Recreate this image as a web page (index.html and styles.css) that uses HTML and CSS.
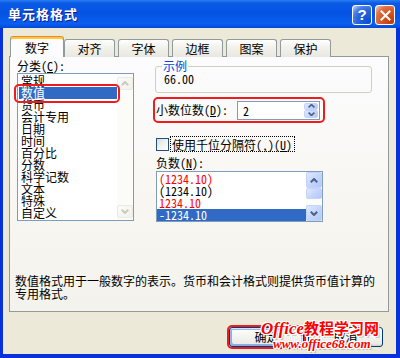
FILE: index.html
```html
<!DOCTYPE html>
<html>

<head>
    <meta charset="utf-8">
    <link rel="stylesheet" href="styles.css">
</head>

<body>
    <div class="window">
        <div class="titlebar">
            <span class="title">单元格格式</span>
            <div class="title_btns">
                <span class="title_btn help_btn">?</span>
                <span class="title_btn close_btn">
                    <svg width="11" height="11" viewBox="0 0 11 11">
                        <path d="M1.5 1.5 L9.5 9.5 M9.5 1.5 L1.5 9.5" stroke="#fff" stroke-width="2" stroke-linecap="square" />
                    </svg>
                </span>
            </div>
        </div>

        <div class="client">
            <div class="tabs">
                <span class="tab tab_active">数字</span>
                <span class="tab">对齐</span>
                <span class="tab">字体</span>
                <span class="tab">边框</span>
                <span class="tab">图案</span>
                <span class="tab">保护</span>
            </div>

            <div class="panel">
                <div class="panel_cols">
                    <div class="col_left">
                        <div class="label">分类(<u>C</u>):</div>
                        <div class="listbox cat_list">
                            <ul class="items">
                                <li>常规</li>
                                <li class="selected">数值</li>
                                <li>货币</li>
                                <li>会计专用</li>
                                <li>日期</li>
                                <li>时间</li>
                                <li>百分比</li>
                                <li>分数</li>
                                <li>科学记数</li>
                                <li>文本</li>
                                <li>特殊</li>
                                <li>自定义</li>
                            </ul>
                            <div class="scroll scroll_off">
                                <span class="sbtn">
                                    <svg width="8" height="5" viewBox="0 0 8 5"><path d="M0.8 4.2 L4 1 L7.2 4.2" /></svg>
                                </span>
                                <span class="strack"></span>
                                <span class="sbtn">
                                    <svg width="8" height="5" viewBox="0 0 8 5"><path d="M0.8 0.8 L4 4 L7.2 0.8" /></svg>
                                </span>
                            </div>
                        </div>
                        <span class="mark cat_mark"></span>
                    </div>

                    <div class="col_right">
                        <fieldset class="sample">
                            <legend>示例</legend>
                            <div class="sample_val">66.00</div>
                        </fieldset>

                        <div class="mark decimal_row">
                            <span>小数位数(<u>D</u>):</span>
                            <div class="spin">
                                <span class="spin_val">2</span>
                                <span class="spin_btns">
                                    <span class="spin_btn">
                                        <svg width="7" height="4" viewBox="0 0 7 4"><path d="M0.6 3.4 L3.5 0.6 L6.4 3.4" /></svg>
                                    </span>
                                    <span class="spin_btn">
                                        <svg width="7" height="4" viewBox="0 0 7 4"><path d="M0.6 0.6 L3.5 3.4 L6.4 0.6" /></svg>
                                    </span>
                                </span>
                            </div>
                        </div>

                        <div class="check_row">
                            <span class="checkbox"></span>
                            <span class="check_label">使用千位分隔符(,)(<u>U</u>)</span>
                        </div>

                        <div class="label neg_label">负数(<u>N</u>):</div>
                        <div class="listbox neg_list">
                            <ul class="items">
                                <li class="red">(1234.10)</li>
                                <li>(1234.10)</li>
                                <li class="red">1234.10</li>
                                <li class="selected">-1234.10</li>
                            </ul>
                            <div class="scroll">
                                <span class="sbtn">
                                    <svg width="8" height="5" viewBox="0 0 8 5"><path d="M0.8 4.2 L4 1 L7.2 4.2" /></svg>
                                </span>
                                <span class="sthumb"></span>
                                <span class="strack"></span>
                                <span class="sbtn">
                                    <svg width="8" height="5" viewBox="0 0 8 5"><path d="M0.8 0.8 L4 4 L7.2 0.8" /></svg>
                                </span>
                            </div>
                        </div>
                    </div>
                </div>

                <p class="desc">数值格式用于一般数字的表示。货币和会计格式则提供货币值计算的<br>专用格式。</p>
            </div>

            <div class="buttons">
                <span class="mark ok_mark"><span class="btn btn_default">确定</span></span>
                <span class="btn">取消</span>
            </div>
        </div>

        <div class="watermark">
            <div class="wm_top"><i>Office</i>教程学习网</div>
            <div class="wm_url">www.office68.com</div>
        </div>
    </div>
</body>

</html>
```

FILE: styles.css
```css
* {
    box-sizing: border-box;
}

html,
body {
    margin: 0;
    padding: 0;
}

body {
    width: 400px;
    height: 358px;
    overflow: hidden;
    font-family: "Noto Sans Mono CJK SC", "Noto Sans CJK SC", sans-serif;
    font-size: 12px;
    line-height: 12px;
    color: #000;
    background: #0831d9;
}

u {
    text-underline-offset: 1px;
}

.window {
    position: relative;
    width: 400px;
    height: 358px;
    display: flex;
    flex-direction: column;
    background: #0831d9;
}

/* title bar */

.titlebar {
    flex: none;
    height: 28px;
    display: flex;
    align-items: center;
    justify-content: space-between;
    padding: 0 5px 0 8px;
    background: linear-gradient(180deg, #2a7cf4 0, #0a5ae6 12%, #0553e3 45%, #0a5ff0 85%, #0648d6 100%);
}

.title {
    color: #fff;
    font-size: 13px;
    font-weight: bold;
    letter-spacing: 1px;
    text-shadow: 1px 1px #0f1a89;
}

.title_btns {
    display: flex;
    gap: 3px;
    padding-top: 2px;
}

.title_btn {
    width: 20px;
    height: 20px;
    border: 1px solid #fff;
    border-radius: 3px;
    display: flex;
    align-items: center;
    justify-content: center;
}

.help_btn {
    color: #fff;
    font-family: "Liberation Sans", sans-serif;
    font-size: 15px;
    font-weight: bold;
    background: radial-gradient(circle at 85% 85%, #0b4ed8 0, #2a65d8 50%, #4a7fe6 72%, #a9c1f0 92%, #e6eefc 100%);
}

.close_btn {
    background: radial-gradient(circle at 85% 85%, #c13c08 0, #d95a26 50%, #e07347 72%, #f4b39a 92%, #fff0e8 100%);
}

/* client area */

.client {
    flex: 1;
    display: flex;
    flex-direction: column;
    margin: 0 4px 4px 3px;
    padding: 9px 0 0 6px;
    background: #ece9d8;
}

.tabs {
    display: flex;
    align-items: flex-end;
    height: 20px;
    padding-left: 1px;
    position: relative;
    z-index: 1;
    margin-bottom: -1px;
}

.tab {
    width: 51px;
    height: 18px;
    margin-right: 3px;
    display: flex;
    align-items: center;
    justify-content: center;
    padding-top: 1px;
    border: 1px solid #919b9c;
    border-bottom: none;
    border-radius: 3px 3px 0 0;
    background: linear-gradient(180deg, #fff 0, #f3f2ec 40%, #e8e7e0 100%);
}

.tab_active {
    width: 54px;
    height: 21px;
    margin-right: 0;
    border-top: 1px solid #e68b2c;
    box-shadow: inset 0 2px #ffc83c;
    padding-top: 2px;
    background: #fcfcfe;
}

.panel {
    width: 380px;
    height: 256px;
    padding: 3px 16px 0 7px;
    border: 1px solid #919b9c;
    background: linear-gradient(180deg, #fcfcfe 0, #f7f6f1 60%, #f3f2ec 100%);
}

.panel_cols {
    display: flex;
    gap: 21px;
}

.col_left {
    position: relative;
    width: 117px;
    flex: none;
}

.col_right {
    flex: 1;
    display: flex;
    flex-direction: column;
}

.label {
    height: 12px;
    margin-bottom: 1px;
}

/* list boxes */

.listbox {
    display: flex;
    border: 1px solid #7f9db9;
    background: #fff;
}

.items {
    flex: 1;
    list-style: none;
    margin: 0;
    padding: 0;
    overflow: hidden;
}

.items li {
    height: 12px;
    padding-left: 2px;
    white-space: nowrap;
}

.items .selected {
    background: #316ac5;
    color: #fff;
}

.items .red {
    color: #f00;
}

.cat_list {
    height: 148px;
}

.cat_list .items {
    padding-top: 1px;
}

.cat_list .items li {
    height: 12px;
    margin-left: 1px;
}

.scroll {
    width: 16px;
    flex: none;
    display: flex;
    flex-direction: column;
    background: #fbfbf8;
}

.sbtn,
.sthumb {
    height: 16px;
    display: flex;
    align-items: center;
    justify-content: center;
    border: 1px solid #c3d3fd;
    border-radius: 2px;
    background: linear-gradient(135deg, #dfe9fe 0, #c1d3fb 60%, #b4c8f6 100%);
}

.sbtn svg path {
    fill: none;
    stroke: #4d6185;
    stroke-width: 2;
}

.sthumb {
    height: 11px;
}

.strack {
    flex: 1;
}

.scroll_off .sbtn {
    border-color: #eae9e2;
    background: linear-gradient(135deg, #fbfbf9 0, #f2f1ec 100%);
    margin-top: 3px;
    height: 13px;
}

.scroll_off .sbtn:last-child {
    margin: 0 0 2px;
}

.scroll_off .sbtn svg path {
    stroke: #cbc9bd;
}

/* red annotation boxes */

.mark {
    border: 2px solid #ee1c1c;
    border-radius: 5px;
}

.cat_mark {
    position: absolute;
    left: -3px;
    top: 24px;
    width: 106px;
    height: 19px;
}

/* right column */

.sample {
    margin: 0;
    padding: 0 8px 7px 8px;
    border: 1px solid #d0d0bf;
    border-radius: 3px;
}

.sample legend {
    padding: 0 1px;
    margin-left: -2px;
    color: #0046d5;
    line-height: 12px;
}

.sample_val {
    padding-top: 1px;
}

.decimal_row {
    width: 172px;
    height: 26px;
    margin: 4px 0 0 -2px;
    padding: 0 3px 0 1px;
    display: flex;
    align-items: center;
    justify-content: space-between;
}

.spin {
    width: 83px;
    height: 19px;
    display: flex;
    border: 1px solid #7f9db9;
    background: #fff;
}

.spin_val {
    flex: 1;
    padding-left: 5px;
    line-height: 17px;
}

.spin_btns {
    width: 15px;
    display: flex;
    flex-direction: column;
    padding: 1px 1px 1px 0;
}

.spin_btn {
    flex: 1;
    display: flex;
    align-items: center;
    justify-content: center;
    border: 1px solid #c3d3fd;
    border-radius: 2px;
    background: linear-gradient(135deg, #dfe9fe 0, #c1d3fb 60%, #b4c8f6 100%);
}

.spin_btn svg path {
    fill: none;
    stroke: #4d6185;
    stroke-width: 1.6;
}

.check_row {
    display: flex;
    align-items: center;
    height: 16px;
    margin: 13px 0 0 1px;
    gap: 1px;
}

.checkbox {
    width: 13px;
    height: 13px;
    border: 1px solid #1c5180;
    background: linear-gradient(135deg, #dcdcd7 0, #f5f5f2 60%, #fff 100%);
}

.check_label {
    height: 16px;
    padding: 1px 2px 0 1px;
    border: 1px dotted #000;
    line-height: 13px;
}

.neg_label {
    margin: 5px 0 2px 1px;
}

.neg_list {
    width: 167px;
    height: 51px;
    margin-left: 1px;
}

.neg_list .items {
    padding-top: 1px;
}

.desc {
    margin: 52px 0 0 -2px;
    line-height: 13px;
    white-space: nowrap;
}

/* buttons */

.buttons {
    display: flex;
    justify-content: flex-end;
    align-items: center;
    gap: 2px;
    padding: 13px 13px 0 0;
}

.ok_mark {
    display: flex;
}

.btn {
    width: 75px;
    height: 20px;
    display: flex;
    align-items: center;
    justify-content: center;
    border: 1px solid #003c74;
    border-radius: 3px;
    background: linear-gradient(180deg, #fff 0, #f3f3ef 50%, #ecebe6 86%, #d6d0c5 100%);
}

.btn_default {
    box-shadow: inset -1px 1px #cee7ff, inset 1px 2px #98b8ea, inset -2px 2px #bcd4f6, inset 1px -1px #89ade4, inset 2px -2px #89ade4;
}

/* watermark over the buttons */

.watermark {
    position: absolute;
    left: 261px;
    top: 320px;
    color: #f00;
    font-weight: bold;
    text-shadow: 1px 0 #fff, -1px 0 #fff, 0 1px #fff, 0 -1px #fff, 1px 1px #fff, -1px -1px #fff, 1px -1px #fff, -1px 1px #fff, 2px 2px rgba(0, 0, 0, 0.2);
}

.wm_top {
    font-size: 15px;
    line-height: 16px;
}

.wm_top i {
    font-family: "Liberation Serif", serif;
    font-size: 17px;
}

.wm_url {
    margin: 1px 0 0 12px;
    font-family: "Liberation Serif", serif;
    font-style: italic;
    font-size: 13px;
    line-height: 12px;
}
```
